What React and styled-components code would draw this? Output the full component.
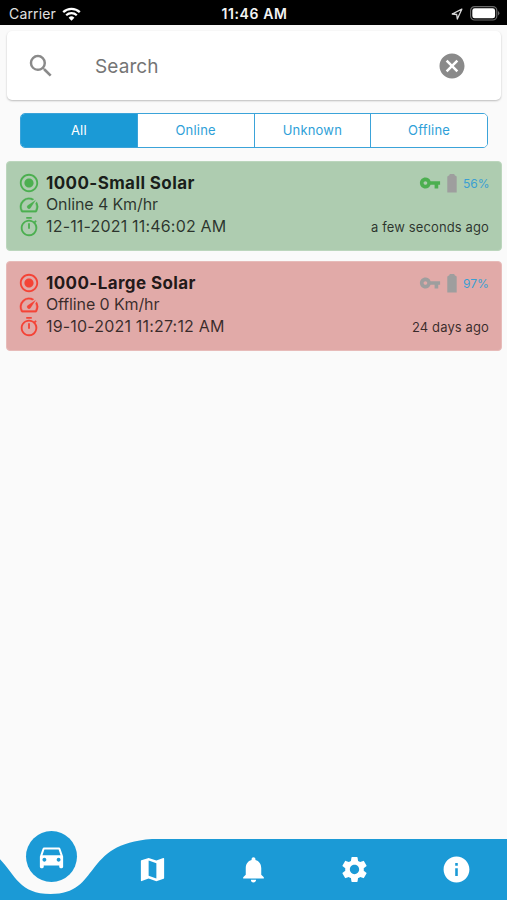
import styled, { createGlobalStyle } from "styled-components";
import {
    MdSearch,
    MdCancel,
    MdRadioButtonChecked,
    MdOutlineTimer,
    MdVpnKey,
    MdDirectionsCar,
    MdMap,
    MdNotifications,
    MdSettings,
    MdInfo,
} from "react-icons/md";

const GlobalStyle = createGlobalStyle`
    * {
        box-sizing: border-box;
    }
    body {
        margin: 0;
        background: #fafafa;
        font-family: Inter, "Liberation Sans", sans-serif;
    }
`;

const Screen = styled.div`
    width: 507px;
    height: 900px;
    display: flex;
    flex-direction: column;
    background: #fafafa;
    overflow: hidden;
`;

const StatusBar = styled.header`
    flex: none;
    height: 25px;
    padding: 2px 7px 0 9px;
    display: grid;
    grid-template-columns: 1fr auto 1fr;
    align-items: center;
    background: #000;
    color: #f4f4f4;
`;

const StatusSide = styled.div`
    display: flex;
    align-items: center;
    justify-content: ${(props) => (props.$end ? "flex-end" : "flex-start")};
    gap: ${(props) => (props.$end ? "7px" : "6px")};
`;

const Carrier = styled.span`
    font-size: 14px;
    letter-spacing: 0.15px;
    color: #e0e0e0;
`;

const Clock = styled.span`
    font-size: 14px;
    font-weight: 600;
    letter-spacing: 0.6px;
`;

const SearchCard = styled.div`
    flex: none;
    height: 69px;
    margin: 6px 6px 0 7px;
    padding: 1px 34px 0 19px;
    display: flex;
    align-items: center;
    background: #fff;
    border-radius: 5px;
    box-shadow: 0 1px 2px rgba(0, 0, 0, 0.25);
    color: #8a8a8a;
`;

const SearchLabel = styled.span`
    flex: 1;
    margin-left: 39px;
    font-size: 19px;
    letter-spacing: 0.1px;
    color: #757575;
`;

const Tabs = styled.div`
    flex: none;
    display: flex;
    height: 35px;
    margin: 13px 19px 0 20px;
    border: 1.5px solid #3ba3d9;
    border-radius: 5px;
    background: #fff;
    overflow: hidden;
`;

const Tab = styled.button`
    flex: 1;
    padding: 0 0 2px;
    border: 0;
    border-left: ${(props) => (props.$first ? "0" : "1.5px solid #3ba3d9")};
    background: ${(props) => (props.$active ? "#1b9ad6" : "#fff")};
    color: ${(props) => (props.$active ? "#fff" : "#2f9fd8")};
    font-family: inherit;
    font-size: 13px;
    letter-spacing: 0.2px;
`;

const DeviceList = styled.main`
    flex: 1;
    display: flex;
    flex-direction: column;
    gap: 10px;
    padding: 13px 5px 0 6px;
`;

const DeviceCard = styled.article`
    height: 90px;
    padding: 9.5px 12px 0 11px;
    display: flex;
    justify-content: space-between;
    border: 1px solid ${(props) => props.$edge};
    border-radius: 4px;
    background: ${(props) => props.$background};
    color: rgba(0, 0, 0, 0.75);
`;

const Details = styled.div`
    display: flex;
    flex-direction: column;
`;

const DetailRow = styled.div`
    display: flex;
    align-items: center;
    gap: 6px;
    height: 22px;
    font-size: 16px;
    letter-spacing: ${(props) => props.$spacing || "0"};

    svg {
        color: ${(props) => props.$color};
    }

    span {
        padding-bottom: 1px;
    }
`;

const DeviceName = styled.strong`
    font-size: 17px;
    font-weight: 700;
    letter-spacing: 0.4px;
    color: rgba(0, 0, 0, 0.87);
`;

const Meta = styled.div`
    display: flex;
    flex-direction: column;
    justify-content: space-between;
    align-items: flex-end;
    height: 66px;
`;

const Indicators = styled.div`
    display: flex;
    align-items: center;
    height: 22px;
    color: #9e9e9e;
`;

const Percent = styled.span`
    width: 26px;
    padding-top: 1px;
    font-size: 12px;
    color: #3b9fd2;
`;

const Ago = styled.span`
    font-size: 13px;
    line-height: 22px;
    letter-spacing: 0.12px;
`;

const BottomNav = styled.nav`
    position: relative;
    flex: none;
    height: 61px;
    display: flex;
    color: #fff;
`;

const NavShape = styled.svg`
    position: absolute;
    left: 0;
    top: 0;
    z-index: 0;
`;

const NavItem = styled.a`
    position: relative;
    z-index: 1;
    flex: 1;
    display: flex;
    align-items: center;
    justify-content: center;
`;

// the selected item floats above the notch
const ActiveBubble = styled.span`
    position: absolute;
    top: -8px;
    left: 26px;
    width: 51px;
    height: 51px;
    display: flex;
    align-items: center;
    justify-content: center;
    border-radius: 50%;
    background: #1b9ad6;
`;

const tabs = ["All", "Online", "Unknown", "Offline"];

const devices = [
    {
        name: "1000-Small Solar",
        status: "Online 4 Km/hr",
        date: "12-11-2021 11:46:02 AM",
        ago: "a few seconds ago",
        battery: "56%",
        online: true,
    },
    {
        name: "1000-Large Solar",
        status: "Offline 0 Km/hr",
        date: "19-10-2021 11:27:12 AM",
        ago: "24 days ago",
        battery: "97%",
        online: false,
    },
];

const WifiIcon = () => (
    <svg width="19" height="14" viewBox="0 0 19 14" fill="none" stroke="#fff">
        <path d="M1.2 5.2a12 12 0 0 1 16.6 0" strokeWidth="2.3" />
        <path d="M4.2 8.3a7.6 7.6 0 0 1 10.6 0" strokeWidth="2.2" />
        <path d="M6.6 10.8a4.1 4.1 0 0 1 5.8 0L9.5 13.7z" fill="#fff" stroke="none" />
    </svg>
);

const LocationIcon = () => (
    <svg width="12" height="12" viewBox="0 0 12 12" fill="none" stroke="#d8d8d8">
        <path d="M10.8 1.2 1.2 6l4.5.5.6 4.5z" strokeWidth="1.3" strokeLinejoin="round" />
    </svg>
);

const BatteryIcon = () => (
    <svg width="30" height="15" viewBox="0 0 30 15">
        <rect x="0.6" y="0.6" width="26.2" height="13.4" rx="4" fill="none" stroke="#6a6a6a" strokeWidth="1.2" />
        <rect x="2.3" y="2.3" width="22.8" height="10" rx="2.4" fill="#fff" />
        <path d="M28 5a2.6 2.6 0 0 1 0 4.6z" fill="#6a6a6a" />
    </svg>
);

const SpeedIcon = () => (
    <svg width="22" height="22" viewBox="0 0 24 24" fill="currentColor" stroke="currentColor" strokeWidth="0.3">
        <path d="M20.38 8.57l-1.23 1.85a8 8 0 0 1-.22 7.58H5.07A8 8 0 0 1 15.58 6.85l1.85-1.23A10 10 0 0 0 3.35 19a2 2 0 0 0 1.72 1h13.85a2 2 0 0 0 1.74-1 10 10 0 0 0-.27-10.44zm-9.79 6.84a2 2 0 0 0 2.83 0l5.66-8.49-8.49 5.66a2 2 0 0 0 0 2.83z" />
    </svg>
);

const DeviceBattery = () => (
    <svg width="22" height="20" viewBox="0 0 22 20" fill="currentColor">
        <path d="M8.6 1h4.8v1l2.3 1.6v15.8H6.3V3.6L8.6 2z" />
    </svg>
);

const Device = ({ device }) => {
    const color = device.online ? "#4caf50" : "#f44336";

    return (
        <DeviceCard
            $background={device.online ? "#aeccb0" : "#e1aaa8"}
            $edge={device.online ? "#bcd6bd" : "#e7bbb9"}
        >
            <Details>
                <DetailRow $color={color}>
                    <MdRadioButtonChecked size={22} />
                    <DeviceName>{device.name}</DeviceName>
                </DetailRow>
                <DetailRow $color={color} $spacing="-0.12px">
                    <SpeedIcon />
                    <span>{device.status}</span>
                </DetailRow>
                <DetailRow $color={color} $spacing="0.18px">
                    <MdOutlineTimer size={22} />
                    <span>{device.date}</span>
                </DetailRow>
            </Details>
            <Meta>
                <Indicators>
                    <MdVpnKey size={22} color={device.online ? "#4caf50" : "#9e9e9e"} />
                    <DeviceBattery />
                    <Percent>{device.battery}</Percent>
                </Indicators>
                <Ago>{device.ago}</Ago>
            </Meta>
        </DeviceCard>
    );
};

const App = () => {
    return (
        <Screen>
            <GlobalStyle />
            <StatusBar>
                <StatusSide>
                    <Carrier>Carrier</Carrier>
                    <WifiIcon />
                </StatusSide>
                <Clock>11:46 AM</Clock>
                <StatusSide $end>
                    <LocationIcon />
                    <BatteryIcon />
                </StatusSide>
            </StatusBar>
            <SearchCard>
                <MdSearch size={30} />
                <SearchLabel>Search</SearchLabel>
                <MdCancel size={30} />
            </SearchCard>
            <Tabs>
                {tabs.map((tab, i) => (
                    <Tab key={tab} $first={i === 0} $active={i === 0}>
                        {tab}
                    </Tab>
                ))}
            </Tabs>
            <DeviceList>
                {devices.map((device) => (
                    <Device key={device.name} device={device} />
                ))}
            </DeviceList>
            <BottomNav>
                <NavShape width="507" height="61" viewBox="0 0 507 61">
                    <path
                        d="M-50.7 0C20.3 4.6 0 55 50.7 55S81.1 4.6 152.1 0H507V61H-50.7z"
                        fill="#1b9ad6"
                    />
                </NavShape>
                <NavItem>
                    <ActiveBubble>
                        <MdDirectionsCar size={31} />
                    </ActiveBubble>
                </NavItem>
                <NavItem>
                    <MdMap size={31} />
                </NavItem>
                <NavItem>
                    <MdNotifications size={31} />
                </NavItem>
                <NavItem>
                    <MdSettings size={31} />
                </NavItem>
                <NavItem>
                    <MdInfo size={31} />
                </NavItem>
            </BottomNav>
        </Screen>
    );
};

export default App;
